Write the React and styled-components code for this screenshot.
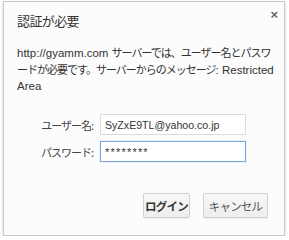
import React from "react";
import styled, { createGlobalStyle } from "styled-components";

const GlobalStyle = createGlobalStyle`
  body {
    margin: 0;
    background: #fff;
    font-family: "Liberation Sans", "Noto Sans CJK JP", sans-serif;
  }
`;

const Dialog = styled.div`
  box-sizing: border-box;
  width: 282px;
  height: 235px;
  margin: 1px 0 0 3px;
  padding: 0 16px 0 13px;
  background: #fcfcfc;
  border: 1px solid #c9c9c9;
  box-shadow: 0 2px 3px rgba(0, 0, 0, 0.18);
  display: flex;
  flex-direction: column;
  color: #333;
  & > * {
    flex-shrink: 0;
  }
`;

const Header = styled.div`
  display: flex;
  justify-content: space-between;
  align-items: flex-start;
  height: 42px;
`;

const Title = styled.h1`
  margin: 11px 0 0;
  font-family: "Noto Sans CJK JP", sans-serif;
  font-size: 13px;
  line-height: 16px;
  font-weight: 400;
  letter-spacing: -0.6px;
  color: #333;
`;

const Close = styled.span`
  margin: 6px -10px 0 0;
  font-size: 13px;
  line-height: 14px;
  font-weight: 700;
  color: #666;
`;

const Message = styled.p`
  margin: 0 -14px 0 0;
  font-size: 11.5px;
  line-height: 16px;
  white-space: nowrap;
  color: #333;
`;

const Ja = styled.span`
  font-family: "Noto Sans CJK JP", sans-serif;
  font-size: 11px;
  letter-spacing: -1px;
`;

const Form = styled.div`
  display: grid;
  grid-template-columns: 76px 146px;
  column-gap: 7px;
  row-gap: 6px;
  align-items: center;
  margin-top: 20px;
`;

const Label = styled.label`
  justify-self: end;
  font-family: "Noto Sans CJK JP", sans-serif;
  font-size: 11px;
  line-height: 16px;
  letter-spacing: -1px;
  white-space: nowrap;
  color: #444;
`;

const Field = styled.input`
  box-sizing: border-box;
  width: 146px;
  height: 21px;
  margin: 0;
  padding: 0 4px;
  font-family: "Liberation Sans", sans-serif;
  font-size: ${(p) => (p.$masked ? "11px" : "10.6px")};
  letter-spacing: ${(p) => (p.$masked ? "1.2px" : "0")};
  color: #333;
  background: #fff;
  border: 1px solid ${(p) => (p.$focused ? "#7ca6e0" : "#dcdcdc")};
  box-shadow: ${(p) => (p.$focused ? "0 0 1px rgba(90,140,220,0.5)" : "none")};
  outline: none;
  border-radius: 0;
`;

const Buttons = styled.div`
  display: flex;
  justify-content: flex-end;
  gap: 13px;
  margin-top: 31px;
`;

const Button = styled.button`
  box-sizing: border-box;
  width: ${(p) => p.$w}px;
  height: 25px;
  padding: 0;
  font-family: "Noto Sans CJK JP", sans-serif;
  font-size: 11.5px;
  letter-spacing: -0.8px;
  font-weight: ${(p) => (p.$primary ? 700 : 400)};
  color: ${(p) => (p.$primary ? "#333" : "#555")};
  background: linear-gradient(#f7f7f7, #eeeeee);
  border: 1px solid #d0d0d0;
  border-radius: 2px;
  box-shadow: 0 1px 0 rgba(0, 0, 0, 0.06);
`;

export default function App() {
  return (
    <>
      <GlobalStyle />
      <Dialog>
        <Header>
          <Title>認証が必要</Title>
          <Close>×</Close>
        </Header>
        <Message>
          http://gyamm.com <Ja>サーバーでは、ユーザー名とパスワ</Ja>
          <br />
          <Ja>ードが必要です。サーバーからのメッセージ</Ja>: Restricted
          <br />
          Area
        </Message>
        <Form>
          <Label>ユーザー名:</Label>
          <Field readOnly defaultValue="SyZxE9TL@yahoo.co.jp" />
          <Label>パスワード:</Label>
          <Field readOnly $masked $focused defaultValue="********" />
        </Form>
        <Buttons>
          <Button $primary $w={47}>ログイン</Button>
          <Button $w={65}>キャンセル</Button>
        </Buttons>
      </Dialog>
    </>
  );
}
